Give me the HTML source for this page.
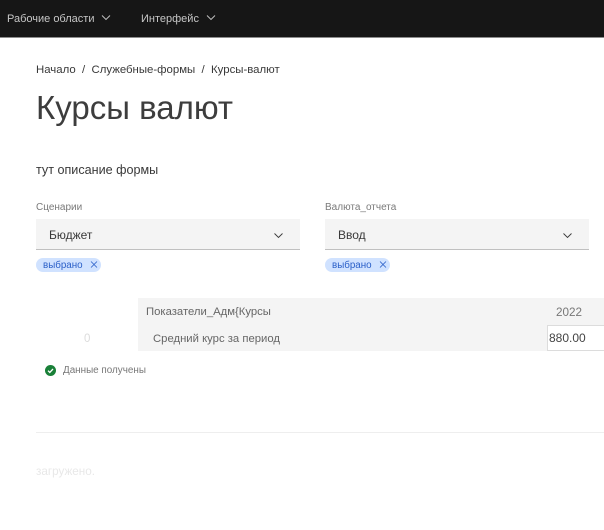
<!DOCTYPE html>
<html lang="ru">
<head>
<meta charset="utf-8">
<style>
html,body{margin:0;padding:0;background:#fff;}
body{width:604px;height:530px;position:relative;overflow:hidden;font-family:"Liberation Sans",sans-serif;color:#262626;}
#w{position:absolute;left:0;top:0;width:604px;height:530px;filter:blur(0.3px);}
.t{position:absolute;white-space:nowrap;line-height:1;}
.b{position:absolute;}
svg{position:absolute;display:block;}
</style>
</head>
<body>
<div id="w">
<div class="b" style="left:0;top:0;width:604px;height:37px;background:#161616;border-bottom:1px solid #8d8d8d"></div>
<div class="t" style="left:7px;top:14px;font-size:11px;color:#c6c6c6">Рабочие области</div>
<svg style="left:101px;top:14px" width="10" height="8" viewBox="0 0 10 8"><path d="M1 1.5L5 5.5L9 1.5" fill="none" stroke="#c6c6c6" stroke-width="0.9"/></svg>
<div class="t" style="left:141px;top:14px;font-size:11px;color:#c6c6c6">Интерфейс</div>
<svg style="left:206px;top:14px" width="10" height="8" viewBox="0 0 10 8"><path d="M1 1.5L5 5.5L9 1.5" fill="none" stroke="#c6c6c6" stroke-width="0.9"/></svg>

<div class="t" style="left:36px;top:65px;font-size:11.4px;color:#393939">Начало&nbsp; /&nbsp; Служебные-формы&nbsp; /&nbsp; Курсы-валют</div>
<div class="t" style="left:36px;top:91px;font-size:33px;color:#3d3d3d">Курсы валют</div>
<div class="t" style="left:36px;top:164px;font-size:12.6px;color:#393939">тут описание формы</div>

<div class="t" style="left:36px;top:203px;font-size:10px;color:#7a7a7a">Сценарии</div>
<div class="b" style="left:36px;top:219px;width:264px;height:30px;background:#f4f4f4;border-bottom:1px solid #c0c0c0"></div>
<div class="t" style="left:49px;top:229px;font-size:12px;color:#393939">Бюджет</div>
<svg style="left:273px;top:232px" width="11" height="8" viewBox="0 0 11 8"><path d="M1.5 1.5L5.5 5.5L9.5 1.5" fill="none" stroke="#393939" stroke-width="0.9"/></svg>
<div class="b" style="left:36px;top:258px;width:65px;height:14px;border-radius:7px;background:#d0e2ff"></div>
<div class="t" style="left:43px;top:260.5px;font-size:9.8px;color:#2a5fc8">выбрано</div>
<svg style="left:89px;top:260px" width="10" height="10" viewBox="0 0 10 10"><path d="M2 1.5L8 7.5M8 1.5L2 7.5" fill="none" stroke="#2a5fc8" stroke-width="0.8"/></svg>

<div class="t" style="left:325px;top:203px;font-size:10px;color:#7a7a7a">Валюта_отчета</div>
<div class="b" style="left:325px;top:219px;width:264px;height:30px;background:#f4f4f4;border-bottom:1px solid #c0c0c0"></div>
<div class="t" style="left:338px;top:229px;font-size:12px;color:#393939">Ввод</div>
<svg style="left:562px;top:232px" width="11" height="8" viewBox="0 0 11 8"><path d="M1.5 1.5L5.5 5.5L9.5 1.5" fill="none" stroke="#393939" stroke-width="0.9"/></svg>
<div class="b" style="left:325px;top:258px;width:65px;height:14px;border-radius:7px;background:#d0e2ff"></div>
<div class="t" style="left:332px;top:260.5px;font-size:9.8px;color:#2a5fc8">выбрано</div>
<svg style="left:378px;top:260px" width="10" height="10" viewBox="0 0 10 10"><path d="M2 1.5L8 7.5M8 1.5L2 7.5" fill="none" stroke="#2a5fc8" stroke-width="0.8"/></svg>

<div class="b" style="left:138px;top:298px;width:466px;height:53px;background:#f4f4f4"></div>
<div class="t" style="left:146px;top:306.5px;font-size:11.3px;color:#666">Показатели_Адм{Курсы</div>
<div class="t" style="left:556px;top:306.5px;font-size:11.7px;color:#777">2022</div>
<div class="t" style="left:84px;top:334px;font-size:11.5px;color:#dcdcdc">0</div>
<div class="t" style="left:153px;top:334px;font-size:11.3px;color:#666">Средний курс за период</div>
<div class="b" style="left:547px;top:325px;width:57px;height:26px;background:#fff;border:1px solid #dcdcdc;border-right:0;box-sizing:border-box"></div>
<div class="t" style="left:549px;top:332px;font-size:12px;color:#444">880.00</div>

<svg style="left:45px;top:365px" width="11" height="11" viewBox="0 0 11 11"><circle cx="5.5" cy="5.5" r="5.5" fill="#198038"/><path d="M3 5.7L4.8 7.4L8 4" fill="none" stroke="#fff" stroke-width="1.3"/></svg>
<div class="t" style="left:63px;top:366px;font-size:9.9px;color:#777">Данные получены</div>

<div class="b" style="left:36px;top:432px;width:568px;height:1px;background:#eeeeee"></div>
<div class="t" style="left:36px;top:466px;font-size:11.7px;color:#e8e8e8">загружено.</div>
</div>
</body>
</html>
